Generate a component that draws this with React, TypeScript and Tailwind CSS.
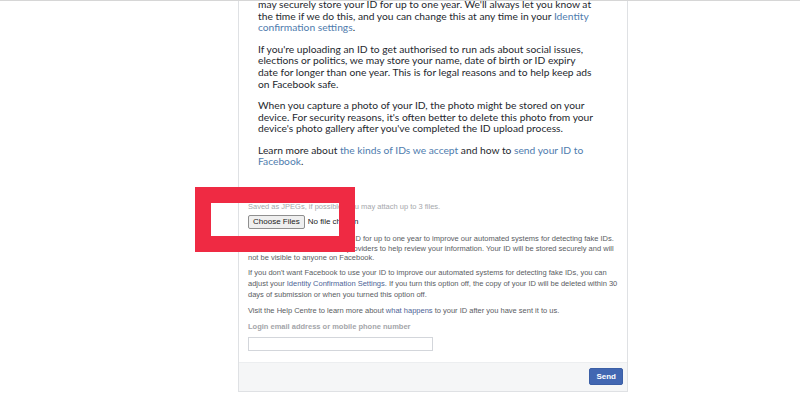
import React from "react";

const L = ({ children }: { children: React.ReactNode }) => (
  <span className="block whitespace-nowrap">{children}</span>
);

const A = ({ children }: { children: React.ReactNode }) => (
  <span className="text-[#4f7cae]">{children}</span>
);

const B = ({ children }: { children: React.ReactNode }) => (
  <span className="text-[#4e6597]">{children}</span>
);

export default function App() {
  return (
    <div className="relative w-[800px] h-[400px] overflow-hidden bg-white border-t border-[#d6d6d6]">
      <div className="ml-[238px] w-[390px] border-x border-b border-[#dfe1e4]">
        {/* upper help text */}
        <div
          className="pl-[19px] pr-[4px] -mt-[2px] text-[10.25px] leading-[11.7px] text-[#25282e]"
          style={{ fontFamily: "Lato, 'Noto Sans', sans-serif" }}
        >
          <p className="mb-[9.5px]">
            <L>may securely store your ID for up to one year. We'll always let you know at</L>
            <L>
              the time if we do this, and you can change this at any time in your <A>Identity</A>
            </L>
            <L>
              <A>confirmation settings</A>.
            </L>
          </p>
          <p className="mb-[9.5px]">
            <L>If you're uploading an ID to get authorised to run ads about social issues,</L>
            <L>elections or politics, we may store your name, date of birth or ID expiry</L>
            <L>date for longer than one year. This is for legal reasons and to help keep ads</L>
            <L>on Facebook safe.</L>
          </p>
          <p className="mb-[9.5px]">
            <L>When you capture a photo of your ID, the photo might be stored on your</L>
            <L>device. For security reasons, it's often better to delete this photo from your</L>
            <L>device's photo gallery after you've completed the ID upload process.</L>
          </p>
          <p>
            <L>
              Learn more about <A>the kinds of IDs we accept</A> and how to <A>send your ID to</A>
            </L>
            <L>
              <A>Facebook</A>.
            </L>
          </p>
        </div>

        {/* lower form */}
        <div
          className="px-[9px] pt-[34px] pb-[11px] text-[7.5px] leading-[10.5px] text-[#5a5d63]"
          style={{ fontFamily: "'Liberation Sans', Arial, sans-serif" }}
        >
          <p className="text-[#a6a8ac]">Saved as JPEGs, if possible. You may attach up to 3 files.</p>
          <div className="mt-[3px] flex items-center gap-[3px]">
            <span className="h-[14px] px-[4px] flex items-center border border-[#8f8f8f] rounded-[2px] bg-[#efefef] text-[8px] text-[#222]">
              Choose Files
            </span>
            <span className="text-[8px] text-[#222]">No file chosen</span>
          </div>
          <p className="mt-[5px] leading-[9.5px]">
            <L>
              We will store a full copy of your ID for up to one year to improve our automated systems for detecting fake IDs.
            </L>
            <L>
              We'll also use trusted service providers to help review your information. Your ID will be stored securely and will
            </L>
            <L>not be visible to anyone on Facebook.</L>
          </p>
          <p className="mt-[4px] leading-[11px]">
            <L>
              If you don't want Facebook to use your ID to improve our automated systems for detecting fake IDs, you can
            </L>
            <L>
              adjust your <B>Identity Confirmation Settings</B>. If you turn this option off, the copy of your ID will be deleted within 30
            </L>
            <L>days of submission or when you turned this option off.</L>
          </p>
          <p className="mt-[6px]">
            Visit the Help Centre to learn more about <B>what happens</B> to your ID after you have sent it to us.
          </p>
          <p className="mt-[6px] font-bold text-[#a3a5a9]">Login email address or mobile phone number</p>
          <div className="mt-[4px] w-[185px] h-[14px] border border-[#d3d6db] bg-white" />
        </div>

        {/* footer */}
        <div className="h-[29px] bg-[#f5f6f7] border-t border-[#eceef0] flex items-center justify-end pr-[4px]">
          <span
            className="h-[17px] px-[6px] flex items-center bg-[#4267b2] border border-[#3b5fa6] rounded-[2px] text-white text-[8px] font-bold"
            style={{ fontFamily: "'Liberation Sans', Arial, sans-serif" }}
          >
            Send
          </span>
        </div>
      </div>

      {/* red highlight overlay */}
      <div className="absolute left-[195px] top-[186px] w-[160px] h-[65px] border-[16px] border-[#ef2a43]" />
    </div>
  );
}
